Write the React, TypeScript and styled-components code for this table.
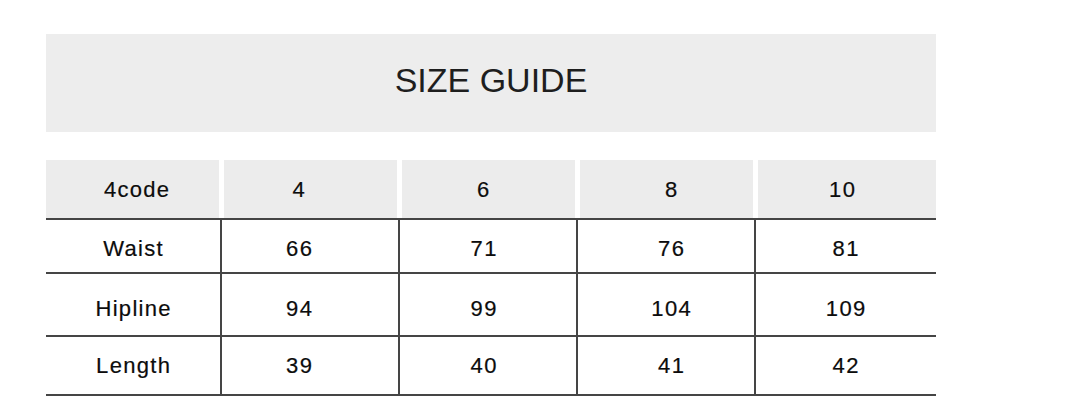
import React from "react";
import styled, { createGlobalStyle } from "styled-components";

const GlobalStyle = createGlobalStyle`
  html, body {
    margin: 0;
    padding: 0;
    background: #ffffff;
  }
  body {
    font-family: "Liberation Sans", Arial, sans-serif;
  }
`;

const Page = styled.div`
  width: 890px;
  padding: 34px 0 0 46px;
  display: flex;
  flex-direction: column;
`;

const TitleBand = styled.div`
  height: 98px;
  background: #ededed;
  display: flex;
  align-items: center;
  justify-content: center;
  padding-bottom: 5px;
  box-sizing: border-box;
`;

const Title = styled.h1`
  margin: 0;
  font-family: "Liberation Sans", Arial, sans-serif;
  font-weight: 400;
  font-size: 34px;
  color: #1e1e1e;
  letter-spacing: 0;
`;

const Table = styled.div`
  margin-top: 28px;
  display: flex;
  flex-direction: column;
`;

const HeaderRow = styled.div`
  display: grid;
  grid-template-columns: 173px 173px 173px 173px 178px;
  column-gap: 5px;
  height: 58px;
`;

const HeaderCell = styled.div<{ $shift: number }>`
  background: #ececec;
  display: flex;
  align-items: center;
  justify-content: center;
  padding-top: 1px;
  padding-left: ${(p) => Math.max(0, p.$shift * 2)}px;
  padding-right: ${(p) => Math.max(0, -p.$shift * 2)}px;
`;

const BodyRow = styled.div<{ $height: number; $last?: boolean }>`
  display: grid;
  grid-template-columns: 174px 178px 178px 178px 182px;
  height: ${(p) => p.$height + (p.$last ? 2 : 0)}px;
  border-top: 2px solid #454545;
  border-bottom: ${(p) => (p.$last ? "2px solid #454545" : "none")};
  box-sizing: border-box;
`;

const BodyCell = styled.div<{ $shift: number; $vshift: number; $first?: boolean }>`
  display: flex;
  align-items: center;
  justify-content: center;
  border-left: ${(p) => (p.$first ? "none" : "2px solid #454545")};
  padding-left: ${(p) => Math.max(0, p.$shift * 2)}px;
  padding-right: ${(p) => Math.max(0, -p.$shift * 2)}px;
  padding-top: ${(p) => Math.max(0, p.$vshift * 2)}px;
  padding-bottom: ${(p) => Math.max(0, -p.$vshift * 2)}px;
`;

const CellText = styled.span`
  font-family: "Liberation Sans", Arial, sans-serif;
  font-size: 22px;
  letter-spacing: 1.3px;
  margin-right: -1.3px;
  color: #0c0c0c;
  line-height: 1;
  -webkit-text-stroke: 0.2px #0c0c0c;
`;

const headerShifts = [4, -12, -5.5, 4.5, -5];
const bodyShifts = [0, -11, -4.5, 5, -0.5];

const header = ["4code", "4", "6", "8", "10"];
const rows = [
  { cells: ["Waist", "66", "71", "76", "81"], height: 54, textShift: 2.5 },
  { cells: ["Hipline", "94", "99", "104", "109"], height: 63, textShift: 4 },
  { cells: ["Length", "39", "40", "41", "42"], height: 59, textShift: 0 },
];

export default function App() {
  return (
    <>
      <GlobalStyle />
      <Page>
        <TitleBand>
          <Title>SIZE GUIDE</Title>
        </TitleBand>
        <Table>
          <HeaderRow>
            {header.map((h, i) => (
              <HeaderCell key={h} $shift={headerShifts[i]}>
                <CellText>{h}</CellText>
              </HeaderCell>
            ))}
          </HeaderRow>
          {rows.map((r, ri) => (
            <BodyRow key={r.cells[0]} $height={r.height} $last={ri === rows.length - 1}>
              {r.cells.map((c, ci) => (
                <BodyCell
                  key={ci}
                  $first={ci === 0}
                  $shift={bodyShifts[ci]}
                  $vshift={r.textShift}
                >
                  <CellText>{c}</CellText>
                </BodyCell>
              ))}
            </BodyRow>
          ))}
        </Table>
      </Page>
    </>
  );
}
